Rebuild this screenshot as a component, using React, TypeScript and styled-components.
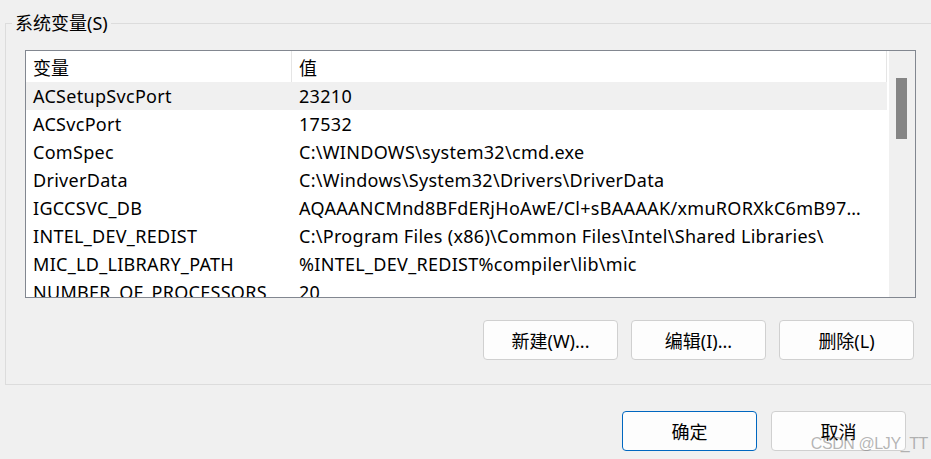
import * as React from "react";
import styled, { createGlobalStyle } from "styled-components";

const GlobalStyle = createGlobalStyle`
  body {
    margin: 0;
    background: #f0f0f0;
    font-family: "Noto Sans", "Noto Sans CJK SC", sans-serif;
    color: #000;
  }
`;

/* system variables shown in the list */
const rows: [string, string][] = [
  ["ACSetupSvcPort", "23210"],
  ["ACSvcPort", "17532"],
  ["ComSpec", "C:\\WINDOWS\\system32\\cmd.exe"],
  ["DriverData", "C:\\Windows\\System32\\Drivers\\DriverData"],
  ["IGCCSVC_DB", "AQAAANCMnd8BFdERjHoAwE/Cl+sBAAAAK/xmuRORXkC6mB97wQaBVkUwZAAAAAAIAAAA"],
  ["INTEL_DEV_REDIST", "C:\\Program Files (x86)\\Common Files\\Intel\\Shared Libraries\\"],
  ["MIC_LD_LIBRARY_PATH", "%INTEL_DEV_REDIST%compiler\\lib\\mic"],
  ["NUMBER_OF_PROCESSORS", "20"],
];

export default function App() {
  return (
    <Page>
      <GlobalStyle />
      <GroupBox>
        <Legend>系统变量(S)</Legend>
        <ListBox>
          <Table>
            <HeaderRow>
              <HeaderCell $first>变量</HeaderCell>
              <HeaderCell>值</HeaderCell>
            </HeaderRow>
            {rows.map(([name, value], i) => (
              <Row key={name} $selected={i === 0}>
                <NameCell>{name}</NameCell>
                <ValueCell>{value}</ValueCell>
              </Row>
            ))}
          </Table>
          <ScrollBar>
            <Thumb />
          </ScrollBar>
        </ListBox>
        <ButtonRow>
          <Button>新建(W)...</Button>
          <Button>编辑(I)...</Button>
          <Button>删除(L)</Button>
        </ButtonRow>
      </GroupBox>
      <Footer>
        <Button $primary>确定</Button>
        <Button>取消</Button>
      </Footer>
      <Watermark>CSDN @LJY_TT</Watermark>
    </Page>
  );
}

const Page = styled.div`
  position: relative;
  width: 931px;
  height: 459px;
  overflow: hidden;
  padding-top: 23px;
  box-sizing: border-box;
`;

const GroupBox = styled.div`
  position: relative;
  margin-left: 5px;
  width: 950px;
  height: 362px;
  box-sizing: border-box;
  border: 1px solid #dcdcdc;
  padding: 26px 0 0 19px;
`;

const Legend = styled.span`
  position: absolute;
  left: 6px;
  top: -13px;
  padding: 0 3px;
  background: #f0f0f0;
  font-size: 18px;
  line-height: 24px;
`;

const ListBox = styled.div`
  display: flex;
  width: 891px;
  height: 248px;
  box-sizing: border-box;
  border: 1px solid #828790;
  background: #fff;
  overflow: hidden;
`;

const Table = styled.div`
  flex: 1;
  min-width: 0;
  display: flex;
  flex-direction: column;
`;

const HeaderRow = styled.div`
  display: grid;
  grid-template-columns: 266px 1fr;
  height: 31px;
  flex-shrink: 0;
  border-right: 1px solid #e5e5e5;
`;

const HeaderCell = styled.div<{ $first?: boolean }>`
  padding-left: 7px;
  font-size: 18px;
  line-height: 34px;
  border-right: ${(p) => (p.$first ? "1px solid #e5e5e5" : "none")};
`;

const Row = styled.div<{ $selected?: boolean }>`
  display: grid;
  grid-template-columns: 266px 1fr;
  height: 28px;
  flex-shrink: 0;
  background: ${(p) => (p.$selected ? "#f0f0f0" : "#fff")};
  font-size: 18px;
  line-height: 28px;
  letter-spacing: 0.3px;
`;

const NameCell = styled.div`
  padding-left: 7px;
  white-space: nowrap;
  overflow: hidden;
`;

const ValueCell = styled.div`
  padding-left: 7px;
  padding-right: 18px;
  white-space: nowrap;
  overflow: hidden;
  text-overflow: ellipsis;
`;

const ScrollBar = styled.div`
  width: 26px;
  flex-shrink: 0;
  margin-left: 2px;
  background: #f0f0f0;
  padding: 27px 0 0 7px;
  box-sizing: border-box;
`;

const Thumb = styled.div`
  width: 11px;
  height: 61px;
  background: #858585;
`;

const ButtonRow = styled.div`
  display: flex;
  gap: 13px;
  width: 891px;
  justify-content: flex-end;
  padding-right: 2px;
  box-sizing: border-box;
  margin-top: 22px;
`;

const Button = styled.button<{ $primary?: boolean }>`
  width: 135px;
  height: 40px;
  box-sizing: border-box;
  border-radius: 4px;
  border: 1px solid ${(p) => (p.$primary ? "#0067c0" : "#d0d0d0")};
  background: #fdfdfd;
  font-family: "Noto Sans", "Noto Sans CJK SC", sans-serif;
  font-size: 18px;
  color: #000;
  padding: 0;
`;

const Footer = styled.div`
  display: flex;
  justify-content: flex-end;
  gap: 14px;
  padding-right: 25px;
  margin-top: 26px;
`;

const Watermark = styled.div`
  position: absolute;
  right: 3px;
  bottom: 6px;
  font-family: "Liberation Sans", sans-serif;
  font-size: 16px;
  letter-spacing: -0.4px;
  color: rgba(120, 120, 120, 0.55);
  pointer-events: none;
`;
